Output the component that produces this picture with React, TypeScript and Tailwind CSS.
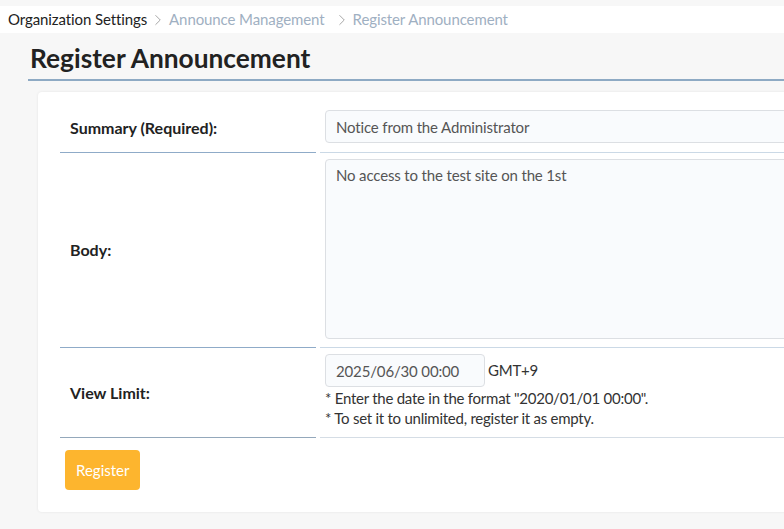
import { ChevronRight } from "lucide-react";

const FONT = "font-['Lato','Noto_Sans',sans-serif]";

function Crumbs() {
  return (
    <div className="mt-[6px] h-[27px] bg-white flex items-center px-2 text-[15px] tracking-[-0.1px]">
      <span className="text-[#222]">Organization Settings</span>
      <ChevronRight className="w-[18px] h-[18px] ml-[2px] mr-[2px] text-[#a5a5a5]" strokeWidth={1.3} />
      <span className="text-[#9fb0c2]">Announce Management</span>
      <ChevronRight className="w-[18px] h-[18px] ml-[8px] mr-[2px] text-[#a5a5a5]" strokeWidth={1.3} />
      <span className="text-[#9fb0c2]">Register Announcement</span>
    </div>
  );
}

export default function App() {
  return (
    <div className={`${FONT} w-full h-[529px] bg-[#f7f7f7] overflow-hidden`}>
      <Crumbs />
      <h1 className="ml-[28px] mt-[9px] pl-[2px] pb-[5px] border-b-2 border-[#8eaac4] text-[26.3px] font-bold text-[#222] leading-[32px]">
        Register Announcement
      </h1>

      <div className="ml-[38px] mt-[11px] w-[820px] bg-white rounded shadow-[0_0_3px_rgba(0,0,0,0.08)] pt-[18px] pl-[22px] pb-[22px]">
        <div className="grid grid-cols-[256px_1fr] gap-x-[4px]">
          {/* summary */}
          <div className="flex items-center pl-[10px] pb-[6px] border-b border-[#8fabc8] text-[16px] font-bold text-[#222]">
            Summary (Required):
          </div>
          <div className="pl-[5px] pb-[9px] border-b border-[#cbd9e6]">
            <input
              readOnly
              value="Notice from the Administrator"
              className="w-full h-[33px] px-[10px] rounded border border-[#dcdfe3] bg-[#f9fbfd] text-[15px] tracking-[-0.15px] text-[#555] outline-none"
            />
          </div>

          {/* body */}
          <div className="flex items-center pl-[10px] border-b border-[#8fabc8] text-[16px] font-bold text-[#222]">
            Body:
          </div>
          <div className="pl-[5px] pt-[6px] pb-[8px] border-b border-[#cbd9e6]">
            <textarea
              readOnly
              value="No access to the test site on the 1st"
              className="block w-full h-[180px] px-[10px] py-[4px] rounded border border-[#dcdfe3] bg-[#f9fbfd] text-[15px] tracking-[-0.15px] text-[#555] outline-none resize-none"
            />
          </div>

          {/* view limit */}
          <div className="flex items-center pl-[10px] border-b border-[#94a8bb] text-[16px] font-bold text-[#222]">
            View Limit:
          </div>
          <div className="pl-[5px] pt-[6px] pb-[9px] border-b border-[#d5dde5] text-[15px] tracking-[-0.25px] text-[#333]">
            <div className="flex items-center">
              <input
                readOnly
                value="2025/06/30 00:00"
                className="w-[160px] h-[33px] px-[10px] rounded border border-[#dcdfe3] bg-[#f9fbfd] text-[15px] tracking-[-0.15px] text-[#555] outline-none"
              />
              <span className="ml-[3px]">GMT+9</span>
            </div>
            <p className="mt-[1px] leading-[20px]">* Enter the date in the format "2020/01/01 00:00".</p>
            <p className="leading-[20px]">* To set it to unlimited, register it as empty.</p>
          </div>
        </div>

        <button className="mt-[12px] ml-[5px] h-[40px] px-[11px] rounded bg-[#fdb52e] text-white text-[15px]">
          Register
        </button>
      </div>
    </div>
  );
}
